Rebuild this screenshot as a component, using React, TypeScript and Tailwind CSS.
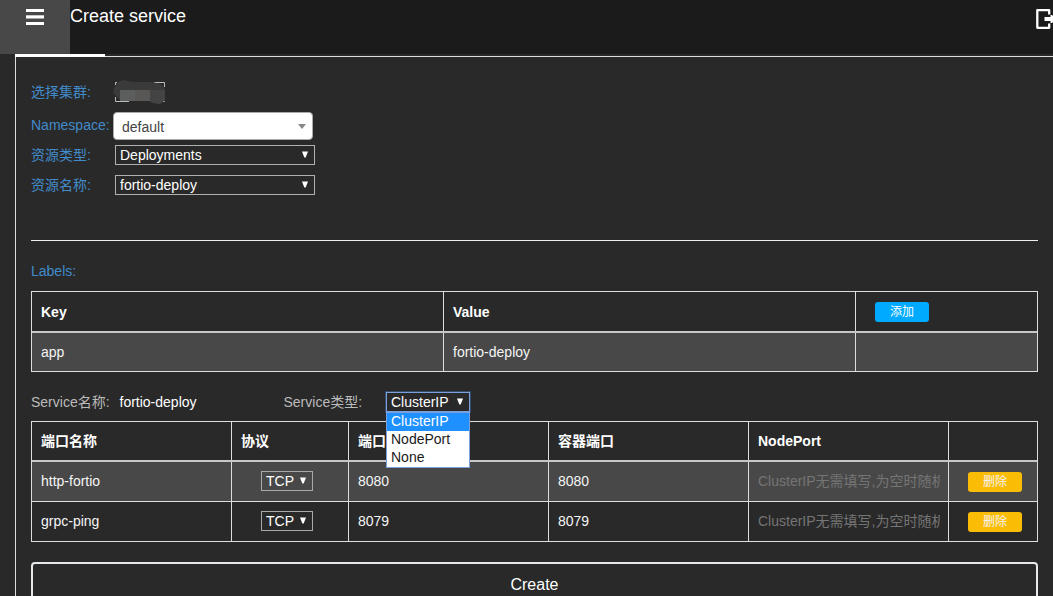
import type { ReactNode } from "react";

function Caret() {
  return (
    <svg className="mb-px ml-auto shrink-0" width="6" height="7" viewBox="0 0 6 7">
      <path d="M0 0.5H6L3.7 6.5H2.3Z" fill="#fff" />
    </svg>
  );
}

function Select({ value, className = "w-[200px] border-[#b0b0b0]" }: { value: string; className?: string }) {
  return (
    <button type="button" className={`flex h-5 items-center border pr-[6px] pl-1 leading-[18px] text-white ${className}`}>
      {value}
      <Caret />
    </button>
  );
}

function Field({ label, className, children }: { label: string; className: string; children: ReactNode }) {
  return (
    <div className={`flex items-center ${className}`}>
      <span className="w-[84px] shrink-0 whitespace-nowrap text-[#428bca]">{label}</span>
      {children}
    </div>
  );
}

const cell = "flex min-w-0 items-center border-l border-[#ddd] px-[9px] first:border-l-0";
const labelCols = "grid grid-cols-[411px_412px_182px]";
const portCols = "grid grid-cols-[199px_117px_200px_200px_200px_89px]";

const ports = [
  { name: "http-fortio", port: "8080", row: "h-[39px] bg-[#484848]" },
  { name: "grpc-ping", port: "8079", row: "h-10 border-t border-[#ddd]" },
];

export default function App() {
  return (
    <div className="h-[596px] w-[1053px] overflow-hidden bg-[#292929] font-['Liberation_Sans','Noto_Sans_CJK_SC',sans-serif] text-[14px] leading-5 text-[#f5f5f5]">
      <header className="flex h-[54px] bg-[#1b1b1b]">
        <button type="button" className="flex w-[70px] shrink-0 justify-center bg-[#484848] pt-[9px]">
          <svg width="18" height="16" viewBox="0 0 18 16" fill="#fff">
            <rect width="18" height="3" />
            <rect y="6.3" width="18" height="3.2" />
            <rect y="13" width="18" height="3" />
          </svg>
        </button>
        <h1 className="pt-[5px] text-[18px] leading-[22px] text-white">Create service</h1>
        <svg className="mt-[9px] ml-auto" width="17" height="20" viewBox="0 0 17 20" fill="none">
          <path d="M13.2 5.5V1.2H1.3V18.8H13.2V14.5" stroke="#fff" strokeWidth="2.3" strokeLinejoin="round" />
          <path d="M8.5 8H14.5V6H16L17 7V13L16 14H14.5V12H8.5Z" fill="#fff" />
        </svg>
      </header>
      <div className="flex h-[3px] pl-[15px]">
        <div className="w-[90px] bg-white" />
        <div className="flex-1 border-b border-[#ddd]" />
      </div>
      <main className="ml-[15px] h-[539px] border-l border-[#ddd] px-[15px]">
        <Field label="选择集群:" className="h-5 translate-y-[25px]">
          <svg className="-ml-[2px]" width="52" height="24" viewBox="0 0 52 24">
            <path d="M2.5 5V2.5H4M41 2.5H51.5V7M51.5 21V21.5H50M2.5 17V21.5H16" fill="none" stroke="#bbb" />
            <path d="M1 8L5 2L10 0L20 2H39L48 4L52 9V20L47 24L40 23L35 21H8L4 17L0 13Z" fill="#3a3a3a" />
            <path d="M7 10H22V21H7Z" fill="#5c5d5d" />
            <path d="M22 10H37V21H22Z" fill="#585756" />
            <path d="M37 10H52V20L47 24L40 23L37 21Z" fill="#444" />
          </svg>
        </Field>
        <div className="flex items-start pt-[35px]">
          <span className="w-[82px] shrink-0 pt-[3px] whitespace-nowrap text-[#428bca]">Namespace:</span>
          <div className="flex h-7 w-[200px] items-center rounded border border-[#aaa] bg-white pt-[2px] pr-[6px] pl-2 text-[#444]">
            default
            <svg className="mb-[2px] ml-auto" width="8" height="5" viewBox="0 0 8 5">
              <path d="M0 0H8L4 5Z" fill="#888" />
            </svg>
          </div>
        </div>
        <Field label="资源类型:" className="mt-[5px] h-5">
          <Select value="Deployments" />
        </Field>
        <Field label="资源名称:" className="mt-[10px] h-5">
          <Select value="fortio-deploy" />
        </Field>
        <hr className="mt-[45px] border-[#eee]" />
        <div className="mt-5 text-[#428bca]">Labels:</div>

        <section className="mt-[10px] border border-[#ddd]">
          <div className={`${labelCols} h-[41px] border-b-2 border-[#c8c8c8] font-bold text-white`}>
            <div className={cell}>Key</div>
            <div className={cell}>Value</div>
            <div className={`${cell} pl-[19px]`}>
              <button type="button" className="h-5 w-[54px] rounded-[3px] bg-[#00aaff] text-[12px] leading-5 font-normal">添加</button>
            </div>
          </div>
          <div className={`${labelCols} h-[38px] bg-[#484848]`}>
            <div className={cell}>app</div>
            <div className={cell}>fortio-deploy</div>
            <div className={cell} />
          </div>
        </section>

        <div className="mt-5 flex h-5 items-center">
          <span className="w-[88.5px] text-[#bbb]">Service名称:</span>
          <span className="w-[164px] text-white">fortio-deploy</span>
          <span className="w-[102.5px] text-[#bbb]">Service类型:</span>
          <div className="relative">
            <Select value="ClusterIP" className="w-[84px] border-[#7ba0dc] outline outline-[#354b70]" />
            <ul className="absolute top-5 left-0 z-10 h-[56px] w-[84px] border border-[#7b9ee0] bg-white leading-[18px] text-[#1a1a1a]">
              <li className="h-[18px] bg-[#1e90ff] pl-1 leading-4 text-white">ClusterIP</li>
              <li className="h-[18px] pl-1 leading-4">NodePort</li>
              <li className="h-[18px] pl-1 leading-4">None</li>
            </ul>
          </div>
        </div>

        <section className="mt-[9px] border border-[#ddd]">
          <div className={`${portCols} h-10 border-b-2 border-[#c8c8c8] font-bold text-white`}>
            {["端口名称", "协议", "端口", "容器端口", "NodePort", ""].map((title, i) => (
              <div key={i} className={cell}>{title}</div>
            ))}
          </div>
          {ports.map((p) => (
            <div key={p.name} className={`${portCols} ${p.row}`}>
              <div className={`${cell} pb-px`}>{p.name}</div>
              <div className="flex items-center border-l border-[#ddd] pb-px pl-[29px]">
                <Select value="TCP" className="w-[52px] border-[#a9a9a9]" />
              </div>
              <div className={`${cell} pb-px`}>{p.port}</div>
              <div className={`${cell} pb-px`}>{p.port}</div>
              <div className={`${cell} pb-px`}>
                <span className="w-[182px] shrink-0 overflow-hidden whitespace-nowrap text-[#757575]">ClusterIP无需填写,为空时随机</span>
              </div>
              <div className="flex items-center border-l border-[#ddd] pl-[19px]">
                <button type="button" className="h-5 w-[54px] rounded-[3px] bg-[#fbbc05] text-[12px] leading-5">删除</button>
              </div>
            </div>
          ))}
        </section>
        <button type="button" className="mt-5 block h-[44px] w-[1007px] rounded border-2 border-[#e5e8ec] pt-[2px] text-[16px] text-white">
          Create
        </button>
      </main>
    </div>
  );
}
